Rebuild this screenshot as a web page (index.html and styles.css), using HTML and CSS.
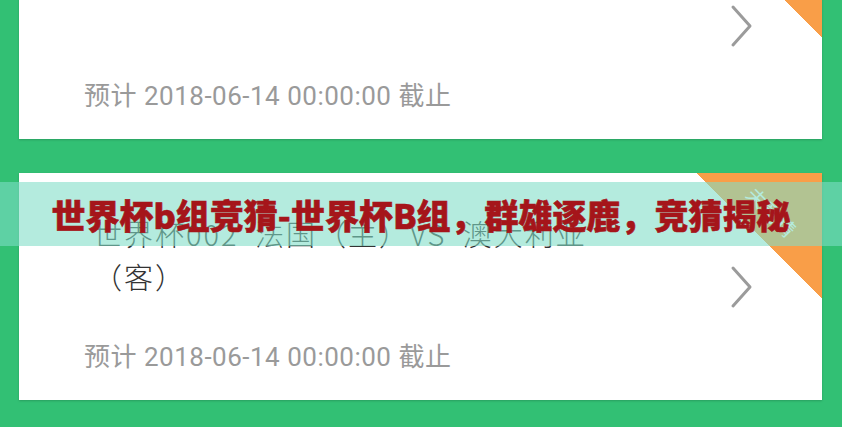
FILE: index.html
```html
<!DOCTYPE html>
<html lang="zh-CN">
<head>
<meta charset="utf-8">
<link rel="stylesheet" href="styles.css">
</head>
<body>
<div class="list">
  <div class="card card-first">
    <div class="corner"><span class="corner-text">未竞猜</span></div>
    <div class="info">
      <div class="title">世界杯001 埃及 VS 乌拉圭</div>
      <div class="deadline">预计 2018-06-14 00:00:00 截止</div>
    </div>
    <svg class="chev" width="24" height="44" viewBox="0 0 24 44"><path d="M3 3 L20 22 L3 41" fill="none" stroke="#9b9b9b" stroke-width="3" stroke-linecap="round" stroke-linejoin="round"/></svg>
  </div>
  <div class="card">
    <div class="corner"><span class="corner-text">未竞猜</span></div>
    <div class="info">
      <div class="title">世界杯002 法国（主）VS 澳大利亚<br>（客）</div>
      <div class="deadline">预计 2018-06-14 00:00:00 截止</div>
    </div>
    <svg class="chev" width="24" height="44" viewBox="0 0 24 44"><path d="M3 3 L20 22 L3 41" fill="none" stroke="#9b9b9b" stroke-width="3" stroke-linecap="round" stroke-linejoin="round"/></svg>
  </div>
</div>
<div class="banner">世界杯b组竞猜-世界杯B组，群雄逐鹿，竞猜揭秘</div>
</body>
</html>
```
FILE: styles.css
```css
html, body {
  margin: 0;
  padding: 0;
}
body {
  width: 842px;
  height: 427px;
  overflow: hidden;
  background: #32c074;
  position: relative;
  font-family: Roboto, "Noto Sans CJK SC", sans-serif;
}
.list {
  display: flex;
  flex-direction: column;
  gap: 34px;
  padding: 0 20px 0 19px;
}
.card {
  position: relative;
  overflow: hidden;
  height: 227px;
  background: #fff;
  display: flex;
  align-items: center;
  box-shadow: 0 1px 2px rgba(0, 0, 0, 0.18);
}
.card-first {
  margin-top: -88px;
}
.info {
  flex: 1;
  align-self: stretch;
  display: flex;
  flex-direction: column;
  justify-content: space-between;
  padding: 39px 0 28px 65px;
}
.title {
  margin-left: 9px;
  font-family: "Noto Sans CJK SC", sans-serif;
  font-weight: 300;
  font-size: 29px;
  line-height: 43px;
  letter-spacing: 2px;
  word-spacing: 8px;
  color: #333;
}
.deadline {
  font-size: 26px;
  line-height: 30px;
  color: #9a9a9a;
  letter-spacing: 0.5px;
}
.chev {
  margin-right: 68px;
  flex: none;
}
.corner {
  position: absolute;
  top: 0;
  right: 0;
  width: 125px;
  height: 125px;
  background: linear-gradient(to bottom left, #f99e48 50%, transparent 50%);
}
.corner-text {
  position: absolute;
  left: 34px;
  top: 27px;
  width: 80px;
  text-align: center;
  transform: rotate(45deg);
  font-family: "Noto Sans CJK SC", sans-serif;
  font-size: 20px;
  line-height: 24px;
  color: #fff;
}
.banner {
  position: absolute;
  left: 0;
  right: 0;
  top: 182px;
  height: 64px;
  background: rgba(127, 221, 199, 0.585);
  display: flex;
  align-items: center;
  justify-content: center;
  font-family: "Noto Sans CJK SC", sans-serif;
  font-weight: 900;
  font-size: 34px;
  color: #a5151a;
  -webkit-text-stroke: 0.6px #a5151a;
}
```
